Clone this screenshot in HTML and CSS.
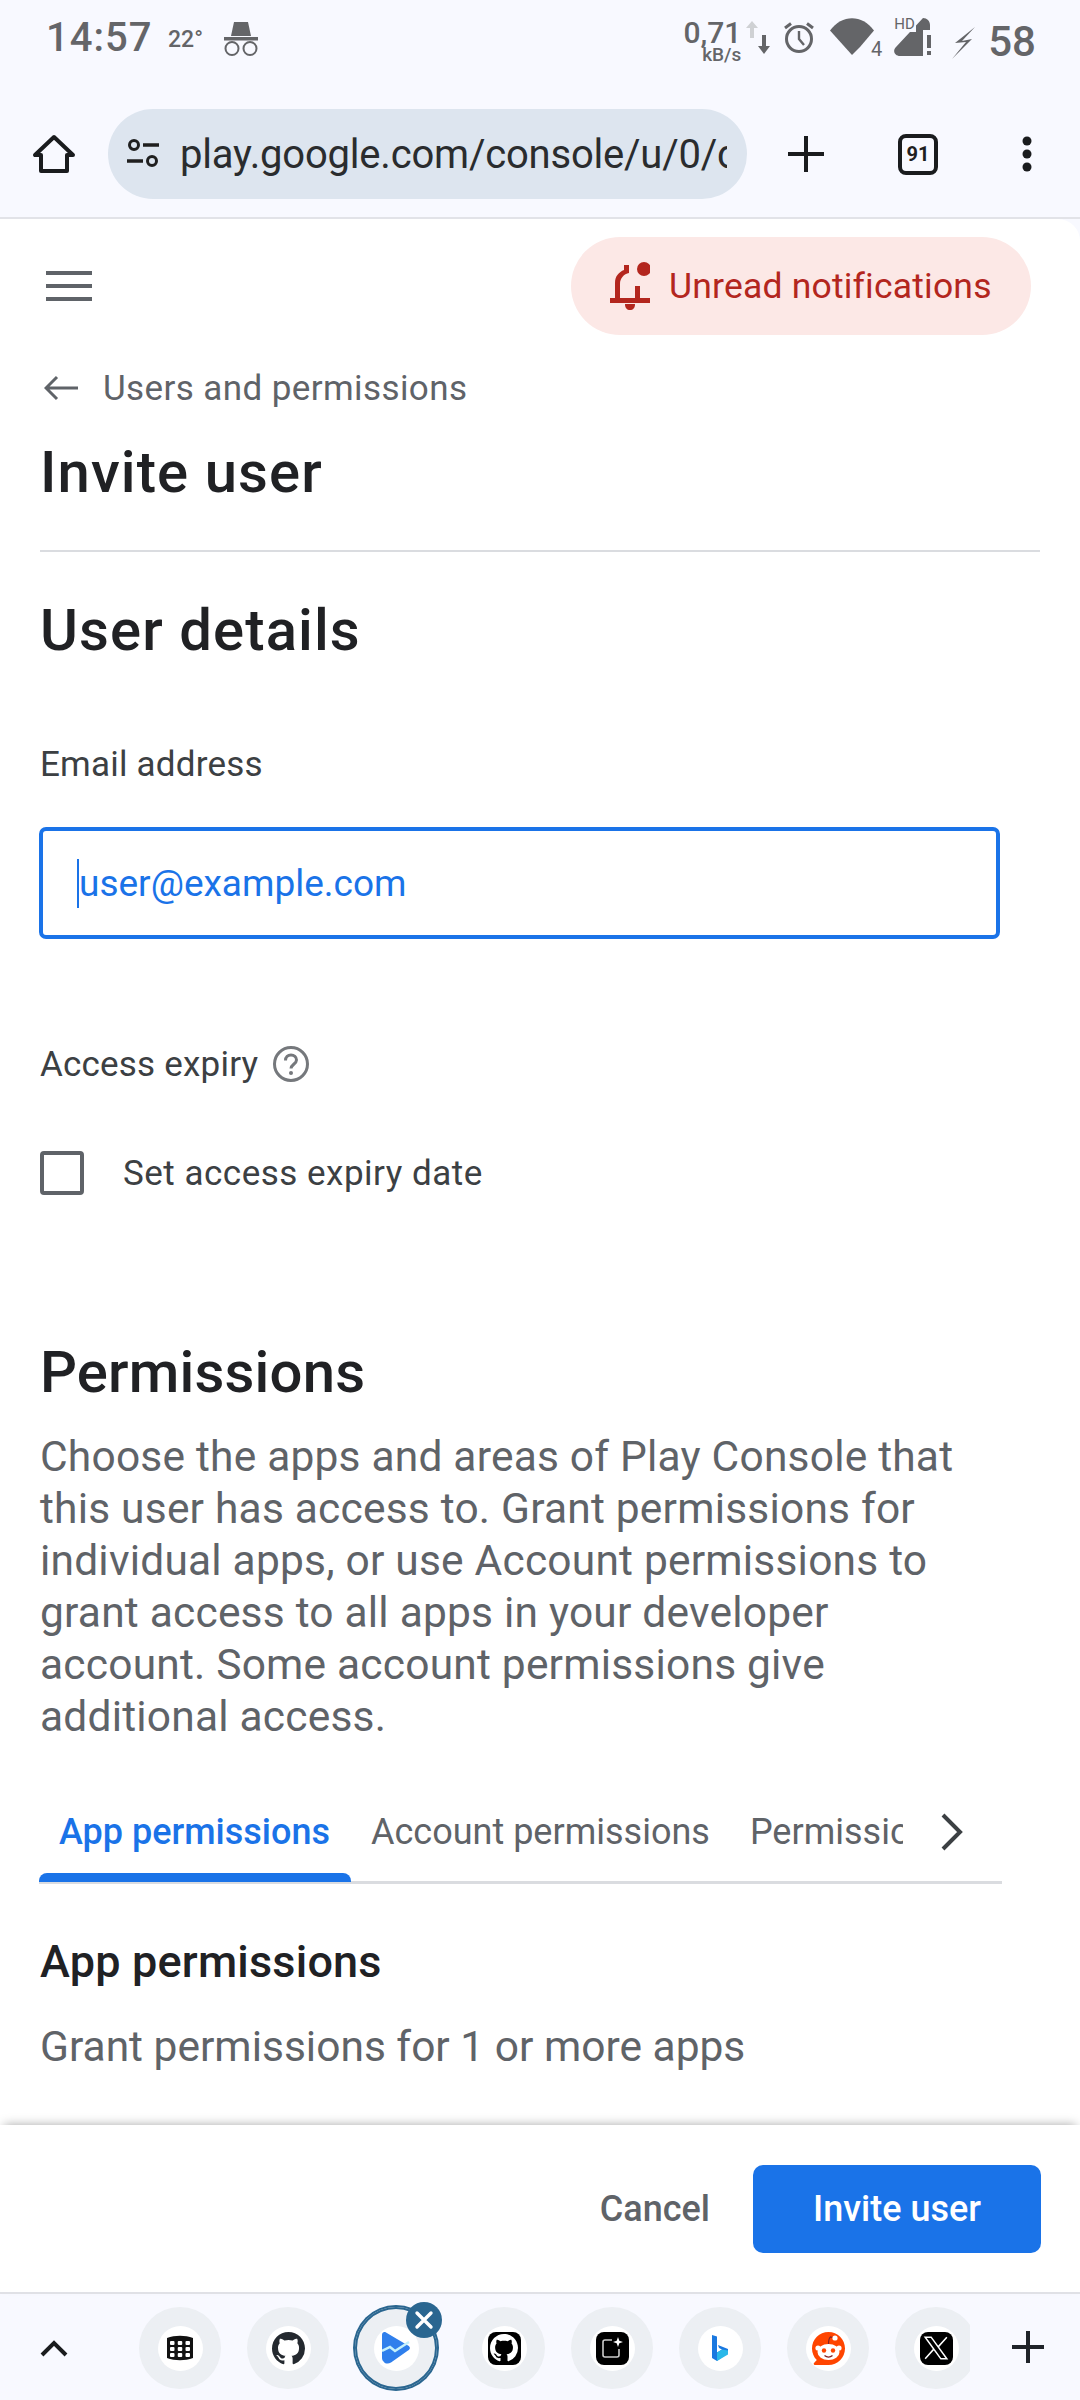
FILE: index.html
```html
<!DOCTYPE html>
<html lang="en">
<head>
    <meta charset="UTF-8">
    <meta name="viewport" content="width=device-width, initial-scale=1.0">
    <title>Invite user</title>
    <link rel="stylesheet" href="styles.css">
</head>
<body>
    <div class="phone">
        <header class="browser-top">
            <div class="status-bar">
                <div class="status-left">
                    <span class="clock">14:57</span>
                    <span class="temp">22°</span>
                    <svg class="incognito" viewBox="0 0 34 34" width="34" height="34">
                        <path d="M10 0h14l3 14H7z" fill="#646568"/>
                        <rect x="0" y="15" width="34" height="3.5" fill="#646568"/>
                        <circle cx="8" cy="26.5" r="6.5" fill="none" stroke="#646568" stroke-width="2"/>
                        <circle cx="26" cy="26.5" r="6.5" fill="none" stroke="#646568" stroke-width="2"/>
                    </svg>
                </div>
                <div class="status-right">
                    <div class="speed"><span class="speed-num">0,71</span><span class="speed-unit">kB/s</span></div>
                    <svg class="arrows" viewBox="0 0 24 34" width="24" height="34">
                        <path d="M6 0l6 7H8v10H4V7H0z" fill="#cfd1d4"/>
                        <path d="M16 14h4v11h4l-6 8-6-8h4z" fill="#646568"/>
                    </svg>
                    <svg class="alarm" viewBox="0 0 32 32" width="32" height="32">
                        <circle cx="16" cy="17" r="12.5" fill="none" stroke="#646568" stroke-width="3"/>
                        <path d="M16 9v8l5 6" fill="none" stroke="#646568" stroke-width="2.4"/>
                        <path d="M2 6l6-4.500M30 6l-6-4.500" stroke="#646568" stroke-width="3"/>
                    </svg>
                    <div class="wifi">
                        <svg viewBox="0 0 44 37" width="44" height="37"><path d="M0 12.500C12 -4 32 -4 44 12.500L30 29 22 37z" fill="#646568"/></svg>
                        <span class="wifi-num">4</span>
                    </div>
                    <div class="signal">
                        <span class="signal-hd">HD</span>
                        <svg viewBox="0 0 38 38" width="38" height="38">
                            <path d="M29 0c4 0 7 3 7 7v5h-7v26H6c-5 0-8-5-4-9z" fill="#646568"/>
                            <rect x="33" y="17" width="4" height="13" fill="#646568"/>
                            <rect x="33" y="33" width="4" height="4" fill="#646568"/>
                        </svg>
                    </div>
                    <svg class="bolt" viewBox="0 0 24 32" width="24" height="32">
                        <path d="M23 0L3 16l11-1L0 32l20-20-10 2z" fill="#646568"/>
                    </svg>
                    <span class="battery">58</span>
                </div>
            </div>
            <div class="toolbar">
                <svg class="home-icon" viewBox="0 0 44 40" width="44" height="40">
                    <path d="M22 3L3 21h6v16h26V21h6z" fill="none" stroke="#1a1c1e" stroke-width="4" stroke-linejoin="round"/>
                </svg>
                <div class="url-pill">
                    <svg class="tune-icon" viewBox="0 0 34 32" width="34" height="32">
                        <circle cx="8" cy="7" r="4.500" fill="none" stroke="#1f1f1f" stroke-width="3"/>
                        <path d="M17 7h16M1 23h16" stroke="#1f1f1f" stroke-width="3.400"/>
                        <circle cx="26" cy="23" r="4.500" fill="none" stroke="#1f1f1f" stroke-width="3"/>
                    </svg>
                    <span class="url-text">play.google.com/console/u/0/console</span>
                </div>
                <svg class="new-tab" viewBox="0 0 36 36" width="36" height="36">
                    <path d="M18 0v36M0 18h36" stroke="#1a1c1e" stroke-width="4"/>
                </svg>
                <div class="tab-count">91</div>
                <svg class="menu-dots" viewBox="0 0 12 36" width="12" height="36">
                    <circle cx="6" cy="5" r="4.500" fill="#1a1c1e"/>
                    <circle cx="6" cy="18" r="4.500" fill="#1a1c1e"/>
                    <circle cx="6" cy="31" r="4.500" fill="#1a1c1e"/>
                </svg>
            </div>
        </header>

        <main class="page">
            <div class="top-row">
                <div class="hamburger"><span></span><span></span><span></span></div>
                <div class="notif-chip">
                    <svg class="bell" viewBox="0 0 40 48" width="40" height="48">
                        <path d="M5 38V21C5 14 9 10 14 8V3h5v8c-5 1-9 5-9 11v16zM25 24h5v14h-5z" fill="#b3261e"/>
                        <rect x="0" y="36" width="40" height="5" fill="#b3261e"/>
                        <path d="M15 42h10c0 4-2 6-5 6s-5-2-5-6z" fill="#b3261e"/>
                        <circle cx="34" cy="7" r="7" fill="#b3261e"/>
                    </svg>
                    <span>Unread notifications</span>
                </div>
            </div>
            <div class="back-row">
                <svg class="back-arrow" viewBox="0 0 34 26" width="34" height="26">
                    <path d="M13 2L2 13l11 11M2 13h32" fill="none" stroke="#5f6368" stroke-width="3"/>
                </svg>
                <span>Users and permissions</span>
            </div>
            <h1 class="page-title">Invite user</h1>
            <hr class="divider">
            <h2 class="section-title first">User details</h2>
            <label class="field-label" for="email">Email address</label>
            <div class="email-input" id="email"><span class="caret"></span><span>user@example.com</span></div>
            <div class="expiry-label">
                <span>Access expiry</span>
                <svg class="help-icon" viewBox="0 0 38 38" width="38" height="38">
                    <circle cx="19" cy="19" r="16.500" fill="none" stroke="#75787c" stroke-width="3"/>
                    <path d="M13.500 15.500c0-3.500 2.500-5.500 5.500-5.500s5.500 2 5.500 5c0 4-5.500 4.500-5.500 8.500" fill="none" stroke="#75787c" stroke-width="3"/>
                    <circle cx="19" cy="28" r="2" fill="#75787c"/>
                </svg>
            </div>
            <div class="check-row">
                <span class="checkbox"></span>
                <span>Set access expiry date</span>
            </div>
            <h2 class="section-title perms">Permissions</h2>
            <p class="perms-text">Choose the apps and areas of Play Console that<br>this user has access to. Grant permissions for<br>individual apps, or use Account permissions to<br>grant access to all apps in your developer<br>account. Some account permissions give<br>additional access.</p>
            <div class="tabs">
                <div class="tab active">App permissions</div>
                <div class="tab">Account permissions</div>
                <div class="tab clipped">Permissions</div>
                <svg class="tab-next" viewBox="0 0 24 38" width="24" height="38">
                    <path d="M3 2l17 17L3 36" fill="none" stroke="#3c4043" stroke-width="4"/>
                </svg>
            </div>
            <h3 class="sub-title">App permissions</h3>
            <p class="sub-text">Grant permissions for 1 or more apps</p>
        </main>

        <footer class="actions">
            <span class="cancel-btn">Cancel</span>
            <span class="invite-btn">Invite user</span>
        </footer>

        <nav class="tab-strip">
            <svg class="strip-toggle" viewBox="0 0 28 18" width="28" height="18">
                <path d="M2 16L14 4l12 12" fill="none" stroke="#1a1c1e" stroke-width="4"/>
            </svg>
            <div class="strip-items">
                <div class="strip-item"><div class="favicon">
                    <svg viewBox="0 0 28 28" width="28" height="28">
                        <path d="M1 4c8-3 18-3 26 0v20c-8 3-18 3-26 0z" fill="#111"/>
                        <g fill="#fff">
                            <rect x="4" y="7" width="4.500" height="4" rx="1"/><rect x="11.750" y="7" width="4.500" height="4" rx="1"/><rect x="19.500" y="7" width="4.500" height="4" rx="1"/>
                            <rect x="4" y="13" width="4.500" height="4" rx="1"/><rect x="11.750" y="13" width="4.500" height="4" rx="1"/><rect x="19.500" y="13" width="4.500" height="4" rx="1"/>
                            <rect x="4" y="19" width="4.500" height="4" rx="1"/><rect x="11.750" y="19" width="4.500" height="4" rx="1"/><rect x="19.500" y="19" width="4.500" height="4" rx="1"/>
                        </g>
                    </svg>
                </div></div>
                <div class="strip-item"><div class="favicon">
                    <svg viewBox="0 0 16 16" width="33" height="33">
                        <path d="M8 0C3.580 0 0 3.580 0 8c0 3.540 2.290 6.530 5.470 7.590.4.070.55-.17.55-.38 0-.19-.01-.82-.01-1.490-2.010.37-2.530-.49-2.690-.94-.09-.23-.48-.94-.82-1.130-.28-.15-.68-.52-.01-.53.630-.01 1.080.58 1.230.82.720 1.210 1.870.87 2.330.66.070-.52.280-.87.510-1.070-1.780-.2-3.640-.89-3.640-3.950 0-.87.310-1.590.82-2.150-.08-.2-.36-1.020.08-2.120 0 0 .67-.21 2.200.82.640-.18 1.320-.27 2-.27s1.360.09 2 .27c1.530-1.040 2.200-.82 2.200-.82.440 1.100.16 1.920.08 2.120.51.560.82 1.270.82 2.150 0 3.070-1.870 3.750-3.650 3.950.29.250.54.730.54 1.480 0 1.070-.01 1.930-.01 2.200 0 .21.150.46.550.38A8.010 8.010 0 0 0 16 8c0-4.420-3.580-8-8-8z" fill="#24292f"/>
                    </svg>
                </div></div>
                <div class="strip-item selected">
                    <div class="favicon">
                        <svg viewBox="0 0 28 32" width="28" height="32">
                            <path d="M0 3c0-2.500 2-3.500 4-2.500l22 13c2.500 1.500 2.500 3.500 0 5L9 30.500c-3 2-6 1-7-.500-1-1-2-2-2-4z" fill="#2f7fec"/>
                            <path d="M0 19l8-4 5 4 14-9" fill="none" stroke="#c4f1fb" stroke-width="2.500"/>
                        </svg>
                    </div>
                    <div class="close-badge">
                        <svg viewBox="0 0 20 20" width="20" height="20"><path d="M3 3l14 14M17 3L3 17" stroke="#fff" stroke-width="3.400" stroke-linecap="round"/></svg>
                    </div>
                </div>
                <div class="strip-item"><div class="favicon">
                    <div class="app-tile">
                        <svg viewBox="0 0 16 16" width="28" height="28">
                            <path d="M8 0C3.580 0 0 3.580 0 8c0 3.540 2.290 6.530 5.470 7.590.4.070.55-.17.55-.38 0-.19-.01-.82-.01-1.490-2.010.37-2.530-.49-2.690-.94-.09-.23-.48-.94-.82-1.130-.28-.15-.68-.52-.01-.53.630-.01 1.080.58 1.230.82.720 1.210 1.870.87 2.330.66.070-.52.280-.87.510-1.070-1.780-.2-3.640-.89-3.640-3.950 0-.87.310-1.590.82-2.150-.08-.2-.36-1.020.08-2.120 0 0 .67-.21 2.200.82.640-.18 1.320-.27 2-.27s1.360.09 2 .27c1.530-1.040 2.200-.82 2.200-.82.440 1.100.16 1.920.08 2.120.51.560.82 1.270.82 2.150 0 3.070-1.870 3.750-3.650 3.950.29.250.54.730.54 1.480 0 1.070-.01 1.930-.01 2.200 0 .21.150.46.550.38A8.010 8.010 0 0 0 16 8c0-4.420-3.580-8-8-8z" fill="#fff"/>
                        </svg>
                    </div>
                </div></div>
                <div class="strip-item"><div class="favicon">
                    <div class="app-tile">
                        <svg viewBox="0 0 22 22" width="22" height="22">
                            <path d="M11 3H4C2.500 3 2 4 2 5v13c0 1.500 1 2 2 2h12c1.500 0 2-1 2-2v-6" fill="none" stroke="#ccc" stroke-width="1.600"/>
                            <path d="M17 0l1.300 3.700L22 5l-3.700 1.300L17 10l-1.300-3.700L12 5l3.700-1.300z" fill="#fff"/>
                        </svg>
                    </div>
                </div></div>
                <div class="strip-item"><div class="favicon">
                    <svg viewBox="0 0 16 26" width="16" height="26">
                        <path d="M0 0l5 1.500v16l5-3-3-1.500-1-3 10 4v4L5 26 0 23z" fill="#1a78e0"/>
                        <path d="M5 17.500l5-3 6 1v4L5 26z" fill="#2ab8e8"/>
                    </svg>
                </div></div>
                <div class="strip-item"><div class="favicon">
                    <svg viewBox="0 0 33 33" width="33" height="33">
                        <path d="M16.500 0C7.400 0 0 7.400 0 16.500c0 4.500 1.800 8.600 4.800 11.600L2 31c-.6.700-.2 2 .8 2h13.700C25.600 33 33 25.600 33 16.500S25.600 0 16.500 0z" fill="#ff4500"/>
                        <ellipse cx="16.500" cy="20" rx="11" ry="8" fill="#fff"/>
                        <circle cx="6" cy="16" r="2.600" fill="#fff"/><circle cx="27" cy="16" r="2.600" fill="#fff"/>
                        <circle cx="12" cy="18.500" r="2.200" fill="#ff4500"/><circle cx="21" cy="18.500" r="2.200" fill="#ff4500"/>
                        <path d="M12.500 23.500c2.500 2 5.500 2 8 0" fill="none" stroke="#842123" stroke-width="1.400"/>
                        <path d="M16.500 12c0-4 .5-6 2-7l4 1" fill="none" stroke="#842123" stroke-width="1.200"/>
                        <circle cx="23" cy="6" r="2.600" fill="#fff"/>
                    </svg>
                </div></div>
                <div class="strip-item"><div class="favicon">
                    <div class="app-tile">
                        <svg viewBox="0 0 24 24" width="26" height="26">
                            <path d="M2 2l8 11-8 9M22 2l-8 9 8 11M2 2h5.500L22 22h-5.500z" fill="none" stroke="#fff" stroke-width="1.400"/>
                        </svg>
                    </div>
                </div></div>
            </div>
            <svg class="strip-add" viewBox="0 0 32 32" width="32" height="32">
                <path d="M16 0v32M0 16h32" stroke="#1f2329" stroke-width="4"/>
            </svg>
        </nav>
    </div>
</body>
</html>
```

FILE: styles.css
```css
* {
    box-sizing: border-box;
}
html, body {
    margin: 0;
    padding: 0;
}
body {
    font-family: Roboto, "Open Sans", sans-serif;
    background-color: #f8f9ff;
    color: #1f1f1f;
}
.phone {
    width: 1080px;
    height: 2400px;
    display: flex;
    flex-direction: column;
    overflow: hidden;
    background-color: #f8f9ff;
}

/* status bar + chrome toolbar */
.browser-top {
    height: 219px;
    flex: none;
    border-bottom: 2px solid #e2e3e8;
}
.status-bar {
    height: 109px;
    padding: 18px 44px 0 46px;
    display: flex;
    justify-content: space-between;
    align-items: flex-start;
    color: #646568;
}
.status-left {
    display: flex;
    align-items: center;
    height: 38px;
}
.clock {
    font-size: 40px;
    font-weight: 500;
    letter-spacing: 1px;
    width: 122px;
}
.temp {
    font-size: 23px;
    font-weight: 500;
    width: 56px;
    padding-top: 4px;
}
.incognito {
    margin-top: 3px;
}
.status-right {
    display: flex;
    align-items: flex-start;
}
.speed {
    width: 56px;
    display: flex;
    flex-direction: column;
    align-items: flex-end;
    line-height: 1;
}
.speed-num {
    font-size: 30px;
    font-weight: 500;
    height: 27px;
}
.speed-unit {
    font-size: 19px;
    font-weight: 500;
}
.arrows {
    margin: 3px 0 0 5px;
}
.alarm {
    margin: 4px 0 0 13px;
}
.wifi {
    margin: 0 0 0 15px;
    width: 52px;
    display: flex;
    position: relative;
}
.wifi-num {
    position: absolute;
    right: 0;
    top: 21px;
    font-size: 20px;
    line-height: 20px;
}
.signal {
    margin-left: 12px;
    width: 40px;
    position: relative;
}
.signal-hd {
    position: absolute;
    left: 0;
    top: -2px;
    font-size: 15px;
    line-height: 16px;
    background-color: #f8f9ff;
    padding-right: 1px;
}
.bolt {
    margin: 9px 0 0 18px;
}
.battery {
    font-size: 42px;
    font-weight: 500;
    line-height: 42px;
    margin: 3px 0 0 12px;
}
.toolbar {
    height: 90px;
    padding: 0 0 0 32px;
    display: flex;
    align-items: center;
}
.home-icon {
    flex: none;
}
.url-pill {
    width: 639px;
    height: 90px;
    margin-left: 32px;
    padding: 0 20px 0 18px;
    border-radius: 45px;
    background-color: #dde5ef;
    display: flex;
    align-items: center;
    flex: none;
}
.tune-icon {
    flex: none;
}
.url-text {
    margin-left: 20px;
    font-size: 40px;
    letter-spacing: -0.2px;
    white-space: nowrap;
    overflow: hidden;
    flex: 1;
    color: #2a2c2e;
}
.new-tab {
    margin-left: 41px;
    flex: none;
}
.tab-count {
    width: 40px;
    height: 41px;
    margin-left: 74px;
    border: 4px solid #1a1c1e;
    border-radius: 8px;
    font-size: 20px;
    font-weight: 700;
    line-height: 33px;
    text-align: center;
    flex: none;
}
.menu-dots {
    margin-left: 83px;
    flex: none;
}

/* page content */
.page {
    flex: 1;
    min-height: 0;
    overflow: hidden;
    padding: 0 40px;
    background: #fff;
    border-top-right-radius: 22px;
}
.top-row {
    height: 98px;
    margin-top: 18px;
    margin-right: -1px;
    display: flex;
    justify-content: space-between;
    align-items: center;
}
.hamburger {
    width: 46px;
    margin-left: 6px;
    display: flex;
    flex-direction: column;
    gap: 9px;
}
.hamburger span {
    height: 4px;
    background-color: #5f6368;
}
.notif-chip {
    width: 460px;
    height: 98px;
    margin-right: 10px;
    padding-left: 39px;
    border-radius: 49px;
    background-color: #fce8e6;
    color: #b3261e;
    font-size: 35.5px;
    letter-spacing: 0.2px;
    display: flex;
    align-items: center;
    gap: 19px;
}
.back-row {
    height: 50px;
    margin-top: 28px;
    display: flex;
    align-items: center;
    color: #5f6368;
    font-size: 35px;
    letter-spacing: 0.4px;
    padding-left: 4px;
}
.back-arrow {
    margin-right: 25px;
}
.page-title {
    height: 70px;
    margin: 24px 0 0;
    font-size: 58px;
    font-weight: 500;
    letter-spacing: 1.1px;
    line-height: 70px;
    color: #202124;
}
.divider {
    margin: 43px 0 0;
    border: none;
    height: 2px;
    background-color: #dadce0;
}
.section-title {
    height: 70px;
    margin: 0;
    font-size: 58px;
    font-weight: 500;
    letter-spacing: 1.1px;
    line-height: 70px;
    color: #202124;
}
.section-title.first {
    margin-top: 43px;
}
.section-title.perms {
    margin-top: 142px;
    letter-spacing: 0.2px;
}
.field-label {
    display: block;
    height: 40px;
    margin-top: 80px;
    font-size: 35px;
    letter-spacing: 0.2px;
    line-height: 40px;
    color: #3c4043;
}
.email-input {
    width: 961px;
    height: 112px;
    margin-top: 42px;
    margin-left: -1px;
    padding-left: 34px;
    border: 4px solid #1a73e8;
    border-radius: 7px;
    color: #1a73e8;
    font-size: 37px;
    display: flex;
    align-items: center;
}
.caret {
    width: 2px;
    height: 49px;
    background-color: #1a73e8;
    margin-top: 1px;
}
.expiry-label {
    height: 40px;
    margin-top: 105px;
    display: flex;
    align-items: center;
    font-size: 35px;
    letter-spacing: 0.2px;
    color: #3c4043;
    gap: 14px;
}
.check-row {
    height: 44px;
    margin-top: 67px;
    display: flex;
    align-items: center;
    font-size: 35px;
    letter-spacing: 0.5px;
    color: #3c4043;
}
.checkbox {
    width: 44px;
    height: 44px;
    margin-right: 39px;
    border: 4px solid #5f6368;
    border-radius: 4px;
}
.perms-text {
    margin: 24px 0 0;
    font-size: 42.5px;
    letter-spacing: 0.2px;
    line-height: 52px;
    color: #5f6368;
    white-space: nowrap;
}
.tabs {
    width: 963px;
    height: 104px;
    margin-top: 37px;
    margin-left: -1px;
    border-bottom: 3px solid #dadce0;
    display: flex;
    align-items: center;
    font-size: 36px;
    color: #5f6368;
    position: relative;
}
.tab {
    height: 100%;
    padding-top: 0;
    display: flex;
    align-items: center;
    white-space: nowrap;
    margin-top: 2px;
}
.tab.active {
    width: 312px;
    padding-left: 20px;
    margin-right: 20px;
    color: #1a73e8;
    font-weight: 500;
    position: relative;
}
.tab.active::after {
    content: "";
    position: absolute;
    left: 0;
    right: 0;
    bottom: 0;
    height: 9px;
    background-color: #1a73e8;
    border-radius: 8px 8px 0 0;
}
.tab + .tab {
    margin-right: 40px;
}
.tab.clipped {
    width: 153px;
    flex: none;
    overflow: hidden;
    margin-right: 37px;
}
.tab-next {
    flex: none;
    margin-top: 2px;
}
.sub-title {
    height: 50px;
    margin: 53px 0 0;
    font-size: 45px;
    font-weight: 500;
    letter-spacing: 0.2px;
    line-height: 50px;
    color: #202124;
}
.sub-text {
    height: 50px;
    margin: 35px 0 0;
    font-size: 42.5px;
    line-height: 50px;
    color: #5f6368;
}

/* sticky footer */
.actions {
    height: 167px;
    flex: none;
    background: #fff;
    box-shadow: 0 -4px 10px -4px rgba(0, 0, 0, 0.35);
    padding: 40px 39px 0 0;
    display: flex;
    justify-content: flex-end;
    align-items: flex-start;
    position: relative;
}
.cancel-btn {
    height: 88px;
    margin-right: 43px;
    font-size: 36px;
    font-weight: 500;
    line-height: 88px;
    color: #5f6368;
}
.invite-btn {
    width: 288px;
    height: 88px;
    border-radius: 10px;
    background-color: #1a73e8;
    color: #fff;
    font-size: 36px;
    font-weight: 500;
    line-height: 88px;
    text-align: center;
}

/* bottom tab strip */
.tab-strip {
    height: 108px;
    flex: none;
    border-top: 2px solid #e0e1e6;
    display: flex;
    align-items: center;
    position: relative;
}
.strip-toggle {
    flex: none;
    margin-left: 40px;
    margin-top: 2px;
}
.strip-items {
    width: 902px;
    height: 106px;
    margin-left: 0;
    padding-left: 71px;
    display: flex;
    align-items: center;
    gap: 26px;
    overflow: hidden;
    flex: none;
    padding-top: 2px;
}
.strip-item {
    width: 82px;
    height: 82px;
    flex: none;
    border-radius: 50%;
    background-color: #eceff3;
    display: flex;
    align-items: center;
    justify-content: center;
    position: relative;
}
.strip-item.selected {
    box-shadow: 0 0 0 2px #2a6690, inset 0 0 0 2px #2a6690;
}
.favicon {
    width: 45px;
    height: 45px;
    border-radius: 50%;
    background-color: #fff;
    display: flex;
    align-items: center;
    justify-content: center;
}
.app-tile {
    width: 33px;
    height: 33px;
    border-radius: 8px;
    background-color: #000;
    display: flex;
    align-items: center;
    justify-content: center;
    overflow: hidden;
}
.close-badge {
    position: absolute;
    top: -5px;
    right: -5px;
    width: 36px;
    height: 36px;
    border-radius: 50%;
    background-color: #2a6690;
    display: flex;
    align-items: center;
    justify-content: center;
}
.strip-add {
    flex: none;
    margin-left: 42px;
}
```
